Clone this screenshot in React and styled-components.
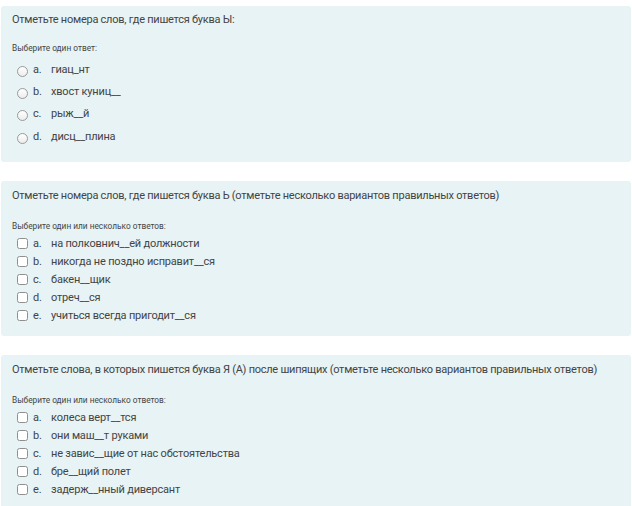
import React from "react";
import styled, { createGlobalStyle } from "styled-components";

const GlobalStyle = createGlobalStyle`
  html, body {
    margin: 0;
    padding: 0;
    background: #ffffff;
  }
  body {
    font-family: Roboto, "Liberation Sans", sans-serif;
    color: #444444;
  }
`;

const Page = styled.div`
  display: flex;
  flex-direction: column;
  gap: 19px;
  padding: 6px 1px 0 1px;
`;

const Card = styled.div`
  background: #e7f3f5;
  border-radius: 3px;
  padding: ${({ $multi }) => ($multi ? "7px 11px 11px" : "6px 11px 14px")};
`;

const Question = styled.div`
  font-size: 11px;
  line-height: 16px;
  letter-spacing: -0.25px;
  color: #444444;
`;

const Prompt = styled.div`
  margin-top: ${({ $multi }) => ($multi ? "16px" : "14px")};
  font-size: 8.3px;
  line-height: 12px;
  color: #444444;
`;

const Answers = styled.div`
  display: flex;
  flex-direction: column;
  margin-top: ${({ $multi }) => ($multi ? "3px" : "4px")};
`;

const Answer = styled.label`
  display: flex;
  align-items: center;
  height: ${({ $multi }) => ($multi ? "18px" : "22.4px")};
  font-size: 11px;
  letter-spacing: -0.2px;
  color: #444444;
`;

const Radio = styled.span`
  box-sizing: border-box;
  width: 11px;
  height: 11px;
  margin: 4px 0 0 5px;
  border-radius: 50%;
  border: 1px solid #9a9a9a;
  background: linear-gradient(#ffffff, #ececec);
`;

const Check = styled.span`
  box-sizing: border-box;
  width: 11px;
  height: 11px;
  margin-left: 5px;
  border-radius: 2.5px;
  border: 1px solid #8f8f8f;
  background: #ffffff;
`;

const Letter = styled.span`
  width: 18px;
  margin-left: 5px;
`;

const Text = styled.span``;

const questions = [
  {
    title: "Отметьте номера слов, где пишется буква Ы:",
    prompt: "Выберите один ответ:",
    multi: false,
    answers: ["гиац_нт", "хвост куниц__", "рыж__й", "дисц__плина"],
  },
  {
    title:
      "Отметьте номера слов, где пишется буква Ь (отметьте несколько вариантов правильных ответов)",
    prompt: "Выберите один или несколько ответов:",
    multi: true,
    answers: [
      "на полковнич__ей должности",
      "никогда не поздно исправит__ся",
      "бакен__щик",
      "отреч__ся",
      "учиться всегда пригодит__ся",
    ],
  },
  {
    title:
      "Отметьте слова, в которых пишется буква Я (А) после шипящих (отметьте несколько вариантов правильных ответов)",
    prompt: "Выберите один или несколько ответов:",
    multi: true,
    answers: [
      "колеса верт__тся",
      "они маш__т руками",
      "не завис__щие от нас обстоятельства",
      "бре__щий полет",
      "задерж__нный диверсант",
    ],
  },
];

const letters = ["a.", "b.", "c.", "d.", "e."];

const QuestionCard = ({ title, prompt, multi, answers }) => (
  <Card $multi={multi}>
    <Question>{title}</Question>
    <Prompt $multi={multi}>{prompt}</Prompt>
    <Answers $multi={multi}>
      {answers.map((a, i) => (
        <Answer key={a} $multi={multi}>
          {multi ? <Check /> : <Radio />}
          <Letter>{letters[i]}</Letter>
          <Text>{a}</Text>
        </Answer>
      ))}
    </Answers>
  </Card>
);

const App = () => (
  <>
    <GlobalStyle />
    <Page>
      {questions.map((q) => (
        <QuestionCard key={q.title} {...q} />
      ))}
    </Page>
  </>
);

export default App;
